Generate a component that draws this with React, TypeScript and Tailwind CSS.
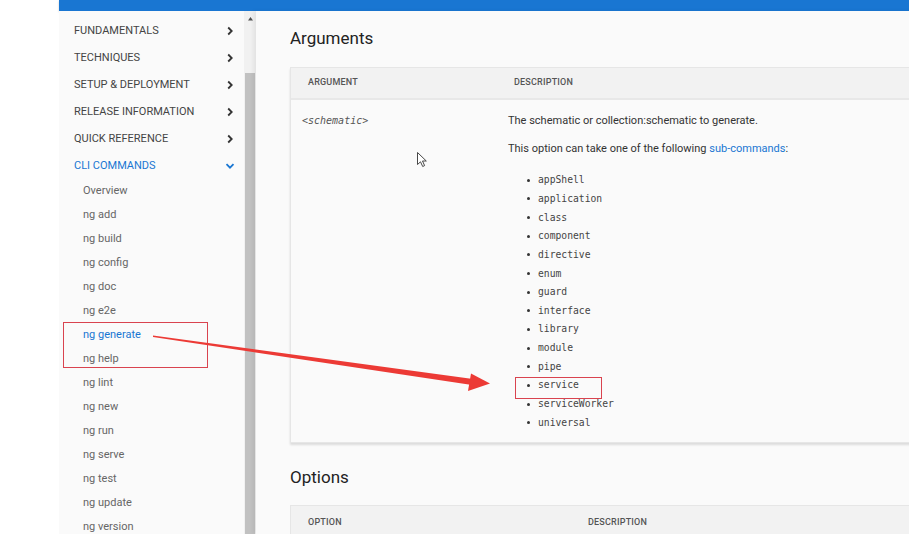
import React from 'react';

const topSections = [
  'FUNDAMENTALS',
  'TECHNIQUES',
  'SETUP & DEPLOYMENT',
  'RELEASE INFORMATION',
  'QUICK REFERENCE',
];

const cliItems = [
  'Overview',
  'ng add',
  'ng build',
  'ng config',
  'ng doc',
  'ng e2e',
  'ng generate',
  'ng help',
  'ng lint',
  'ng new',
  'ng run',
  'ng serve',
  'ng test',
  'ng update',
  'ng version',
];

const schematics = [
  'appShell',
  'application',
  'class',
  'component',
  'directive',
  'enum',
  'guard',
  'interface',
  'library',
  'module',
  'pipe',
  'service',
  'serviceWorker',
  'universal',
];

const Chevron: React.FC<{ down?: boolean; className?: string }> = ({ down, className = '' }) => (
  <svg width="12" height="12" viewBox="0 0 12 12" className={className}>
    {down ? (
      <path d="M2.5 4.2 L6 7.7 L9.5 4.2" fill="none" stroke="currentColor" strokeWidth="1.8" />
    ) : (
      <path d="M4.2 2.5 L7.7 6 L4.2 9.5" fill="none" stroke="currentColor" strokeWidth="1.8" />
    )}
  </svg>
);

const Sidebar: React.FC = () => (
  <nav className="w-[185px] shrink-0 bg-[#fafafa] pt-[6.5px] font-['Roboto',sans-serif]">
    {topSections.map((s) => (
      <div key={s} className="h-[27px] flex items-center justify-between pl-[15px] pr-[8px] text-[11px] text-[#444]">
        <span>{s}</span>
        <Chevron className="text-[#333]" />
      </div>
    ))}
    <div className="h-[27px] flex items-center justify-between pl-[15px] pr-[8px] text-[11px] text-[#1976d2]">
      <span>CLI COMMANDS</span>
      <Chevron down className="text-[#1976d2]" />
    </div>
    {cliItems.map((c) => (
      <div
        key={c}
        className={`h-[24px] flex items-center pl-[24px] text-[11px] ${
          c === 'ng generate' ? 'text-[#1976d2]' : 'text-[#666]'
        }`}
      >
        {c}
      </div>
    ))}
  </nav>
);

const Scrollbar: React.FC = () => (
  <div className="w-[12px] shrink-0 bg-[#f1f1f1] flex flex-col items-center">
    <svg width="7" height="6" viewBox="0 0 7 6" className="mt-[5px]">
      <path d="M3.5 1 L6 4.5 L1 4.5 Z" fill="#505050" />
    </svg>
    <div className="mt-[51px] w-[10px] flex-1 bg-[#c1c1c1]" />
  </div>
);

const HeaderCell: React.FC<{ w: string; children: React.ReactNode }> = ({ w, children }) => (
  <div className={`${w} shrink-0 pl-[17px] text-[9px] font-medium tracking-[0.2px] text-[#555]`}>{children}</div>
);

const Content: React.FC = () => (
  <main className="flex-1 bg-[#fafafa] pl-[34px] pt-[15px] font-['Roboto',sans-serif] text-[#333] shadow-[-3px_0_4px_rgba(0,0,0,0.06)]">
    <h2 className="text-[17px] leading-[24px] text-[#222]">Arguments</h2>

    <div className="mt-[17px] w-[700px] border border-[#e6e6e6] bg-[#fafafa] shadow-[0_2px_2px_rgba(0,0,0,0.12)]">
      <div className="h-[32px] flex items-center bg-[#f2f2f2] border-b-2 border-[#e8e8e8]">
        <HeaderCell w="w-[206px]">ARGUMENT</HeaderCell>
        <HeaderCell w="flex-1">DESCRIPTION</HeaderCell>
      </div>
      <div className="flex pt-[13px] pb-[10px]">
        <div className="w-[206px] shrink-0 pl-[11px] leading-[16px] font-['DejaVu_Sans_Mono',monospace] italic text-[10px] text-[#555]">
          &lt;schematic&gt;
        </div>
        <div className="flex-1 pl-[11px] text-[11px] leading-[16px]">
          <p>The schematic or collection:schematic to generate.</p>
          <p className="mt-[12px]">
            This option can take one of the following{' '}
            <span className="text-[#1976d2]">sub-commands</span>:
          </p>
          <ul className="mt-[14px] pl-[19px]">
            {schematics.map((s) => (
              <li key={s} className="h-[18.65px] flex items-center gap-[8px]">
                <span className="w-[3px] h-[3px] rounded-full bg-[#333]" />
                <span className="font-['DejaVu_Sans_Mono',monospace] text-[9.7px] text-[#444]">{s}</span>
              </li>
            ))}
          </ul>
        </div>
      </div>
    </div>

    <h2 className="mt-[22px] text-[17px] leading-[24px] text-[#222]">Options</h2>

    <div className="mt-[16px] w-[700px] border border-[#e6e6e6]">
      <div className="h-[34px] flex items-center bg-[#f2f2f2]">
        <HeaderCell w="w-[280px]">OPTION</HeaderCell>
        <HeaderCell w="flex-1">DESCRIPTION</HeaderCell>
      </div>
    </div>
  </main>
);

const Annotations: React.FC = () => (
  <svg width="909" height="534" viewBox="0 0 909 534" className="absolute inset-0 pointer-events-none">
    {/* highlight boxes */}
    <rect x="63.5" y="322.5" width="144" height="45" fill="none" stroke="#d9434f" strokeWidth="1" />
    <rect x="515.5" y="377.5" width="86" height="21" fill="none" stroke="#d9434f" strokeWidth="1" />
    {/* arrow */}
    <polygon points="153,335.5 153,337 472,385 473,379" fill="#ec3a35" />
    <polygon points="471,373.5 490,383.5 468,391" fill="#ec3a35" />
    {/* mouse cursor */}
    <path
      d="M417.5 152.5 L417.5 164.5 L420.5 161.8 L422.7 166.5 L424.6 165.6 L422.5 161 L426.3 161 Z"
      fill="#fff"
      stroke="#333"
      strokeWidth="0.9"
    />
  </svg>
);

export default function App() {
  return (
    <div className="relative w-[909px] h-[534px] overflow-hidden bg-white flex">
      <div className="w-[59px] shrink-0 bg-white" />
      <div className="flex-1 flex flex-col min-w-0">
        <div className="h-[11px] shrink-0 bg-[#1976d2] shadow-[0_1px_2px_rgba(0,0,0,0.2)]" />
        <div className="flex-1 flex min-h-0">
          <Sidebar />
          <Scrollbar />
          <Content />
        </div>
      </div>
      <Annotations />
    </div>
  );
}
